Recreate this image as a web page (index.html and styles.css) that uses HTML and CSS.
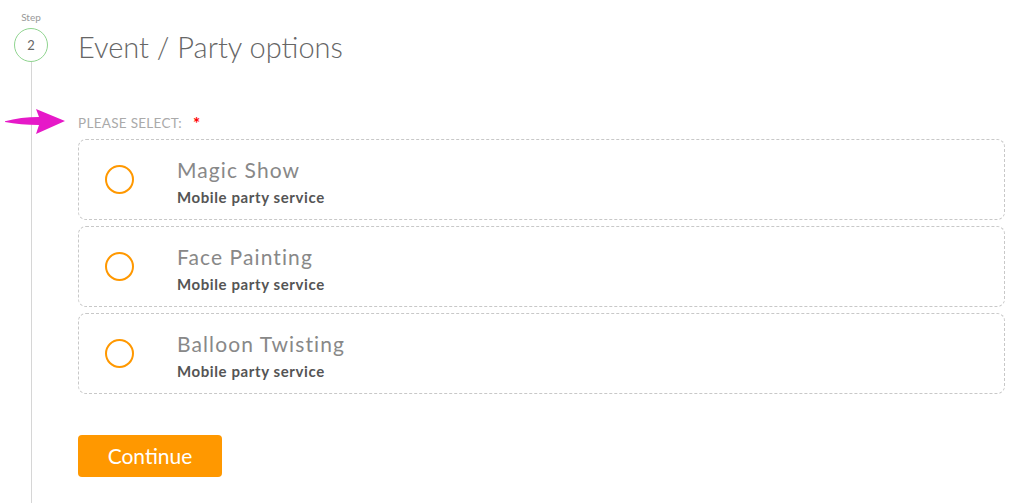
FILE: index.html
```html
<!DOCTYPE html>
<html lang="en">
<head>
<meta charset="utf-8">
<title>Event / Party options</title>
<link rel="stylesheet" href="styles.css">
</head>
<body>
<div class="page">
  <div class="stepper">
    <div class="step-label">Step</div>
    <div class="step-circle">2</div>
    <div class="step-line"></div>
  </div>
  <main class="content">
    <h1 class="title">Event / Party options</h1>
    <div class="field">
      <svg class="pointer" width="62" height="28" viewBox="0 0 62 28" aria-hidden="true">
        <path d="M0 13.2 C10 10.5 22 9 34 9 L31 1 L60 13 L31 26 L34 17 C22 17 10 16 0 14 Z" fill="#e619c8"/>
      </svg>
      <div class="field-label">PLEASE SELECT: <span class="req">*</span></div>
      <div class="options">
        <label class="option">
          <span class="radio"></span>
          <span class="option-text">
            <span class="option-title">Magic Show</span>
            <span class="option-sub">Mobile party service</span>
          </span>
        </label>
        <label class="option">
          <span class="radio"></span>
          <span class="option-text">
            <span class="option-title">Face Painting</span>
            <span class="option-sub">Mobile party service</span>
          </span>
        </label>
        <label class="option">
          <span class="radio"></span>
          <span class="option-text">
            <span class="option-title">Balloon Twisting</span>
            <span class="option-sub">Mobile party service</span>
          </span>
        </label>
      </div>
    </div>
    <button class="continue" type="button">Continue</button>
  </main>
</div>
</body>
</html>
```
FILE: styles.css
```css
* { box-sizing: border-box; }
html, body { margin: 0; padding: 0; background: #fff; }
body {
  font-family: "Lato", "Noto Sans", sans-serif;
  color: #555;
}
.page {
  display: grid;
  grid-template-columns: 62px 1fr;
  column-gap: 16px;
  min-height: 503px;
  padding-right: 25px;
}
.stepper {
  display: flex;
  flex-direction: column;
  align-items: center;
  padding-top: 11px;
}
.step-label {
  font-size: 10px;
  color: #999;
  line-height: 12px;
  margin-bottom: 5px;
}
.step-circle {
  width: 34px;
  height: 34px;
  border: 1.5px solid #8fd48f;
  border-radius: 50%;
  display: flex;
  align-items: center;
  justify-content: center;
  font-size: 13px;
  color: #666;
}
.step-line {
  flex: 1;
  width: 1px;
  background: #d6d6d6;
}
.content {
  padding-top: 28px;
}
.title {
  margin: 0;
  font-size: 29px;
  font-weight: 300;
  color: #666;
  line-height: 38px;
}
.field {
  position: relative;
  margin-top: 47px;
}
.pointer {
  position: absolute;
  left: -73px;
  top: -5px;
}
.field-label {
  font-size: 13.5px;
  letter-spacing: 0.3px;
  color: #aaa;
  line-height: 16px;
  margin-bottom: 7px;
  display: flex;
  align-items: center;
}
.req {
  color: #f00;
  margin-left: 11px;
  font-size: 17px;
  font-weight: 700;
  line-height: 16px;
  padding-top: 3px;
}
.options {
  display: flex;
  flex-direction: column;
  gap: 6.5px;
}
.option {
  display: flex;
  align-items: center;
  height: 80.5px;
  border: 1px dashed #c8c8c8;
  border-radius: 8px;
  padding-left: 26px;
  cursor: pointer;
}
.radio {
  width: 29px;
  height: 29px;
  border: 2.5px solid #ff9800;
  border-radius: 50%;
  flex: none;
  margin-right: 43px;
}
.option-text {
  display: flex;
  flex-direction: column;
  padding-top: 6px;
}
.option-title {
  font-size: 21px;
  letter-spacing: 1.1px;
  color: #888;
  line-height: 26px;
}
.option-sub {
  font-size: 15px;
  letter-spacing: 0.6px;
  font-weight: 700;
  color: #555;
  line-height: 20px;
  margin-top: 4px;
}
.continue {
  margin-top: 41px;
  width: 144px;
  height: 42px;
  border: none;
  border-radius: 4px;
  background: #ff9800;
  color: #fff;
  font-family: inherit;
  font-size: 21px;
  cursor: pointer;
}
```
